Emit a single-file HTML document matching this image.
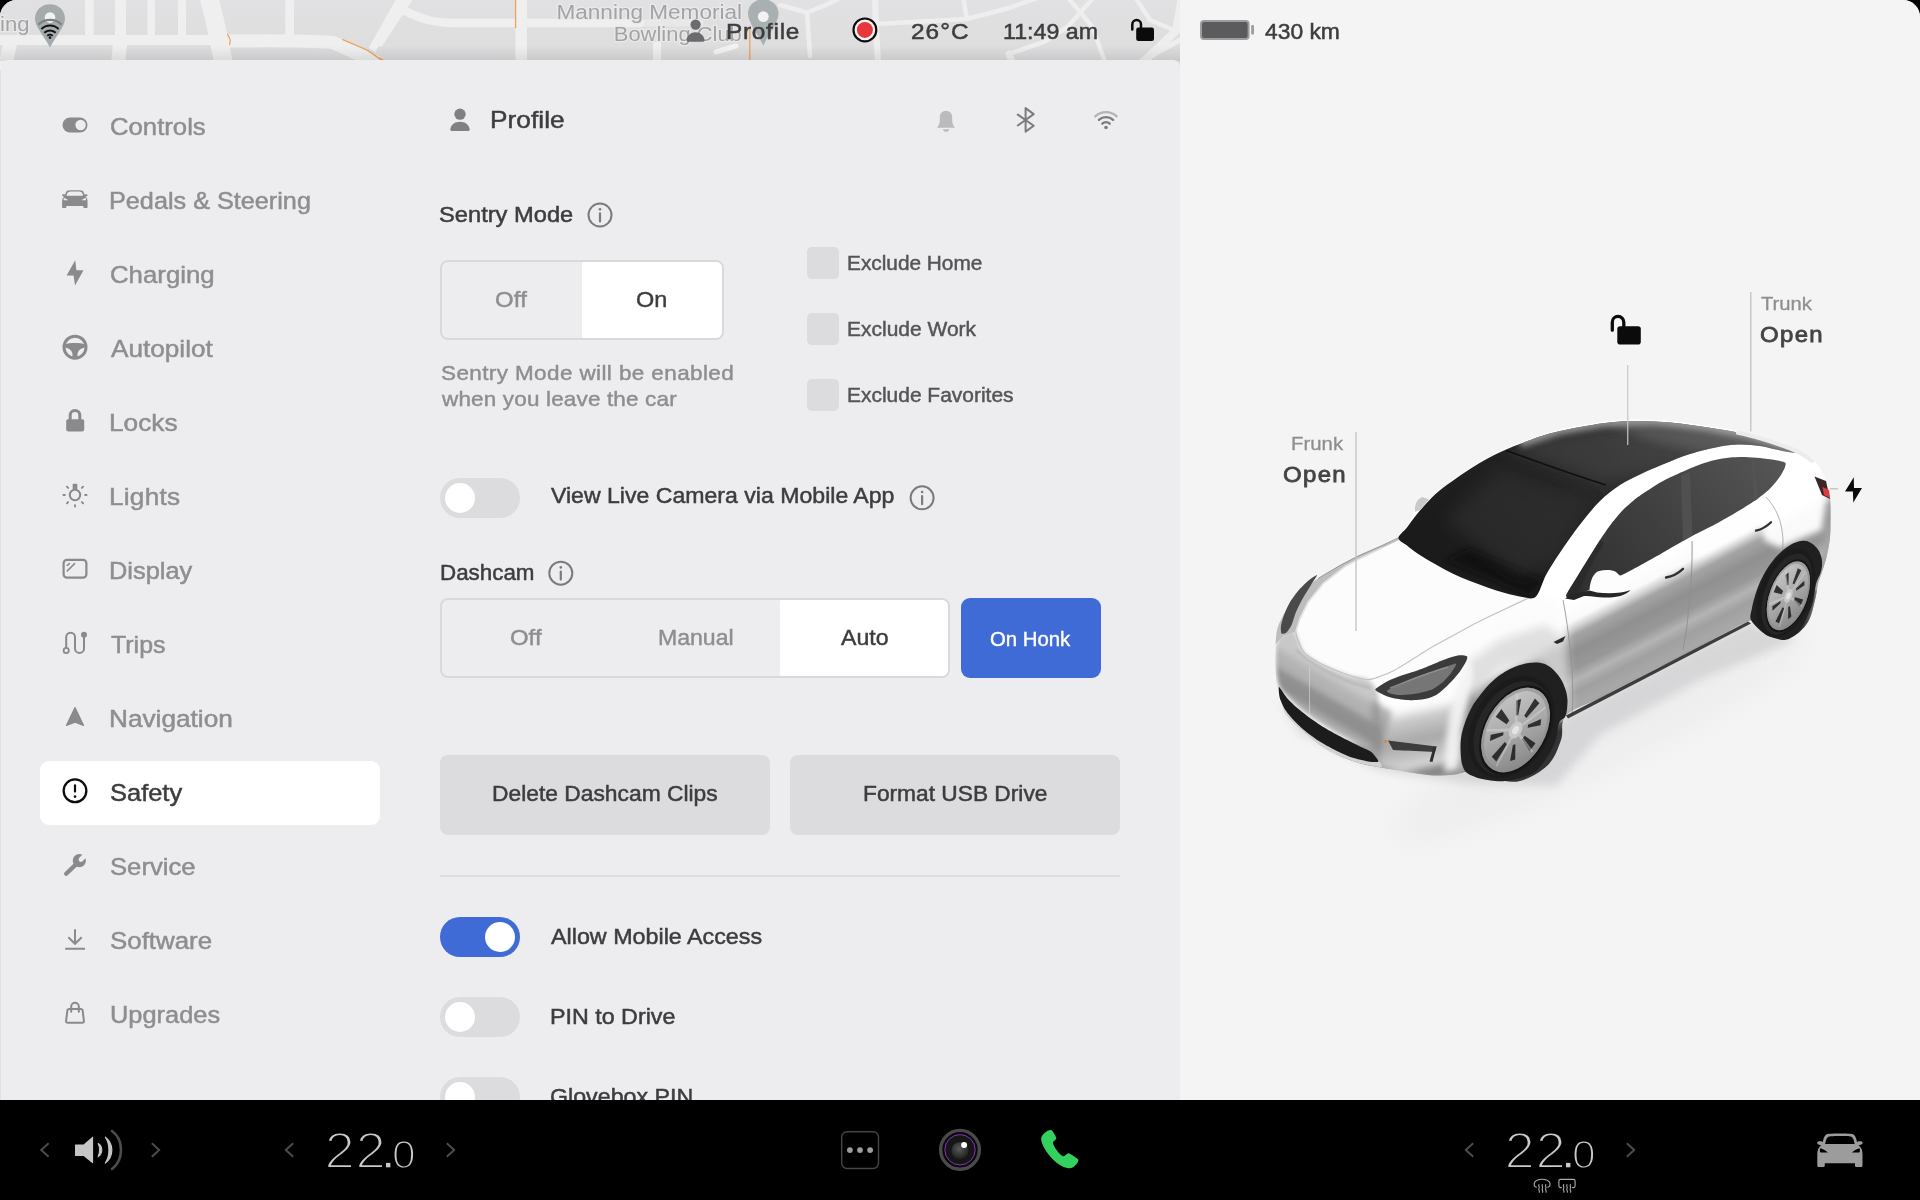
<!DOCTYPE html>
<html lang="en">
<head>
<meta charset="utf-8">
<title>Safety</title>
<style>
*{box-sizing:border-box;margin:0;padding:0}
html,body{width:1920px;height:1200px;overflow:hidden;background:#000}
body{position:relative;font-family:"Liberation Sans",sans-serif;color:#3d3d3f}
.abs{position:absolute}
svg{position:absolute;overflow:visible}
.g,#status,#map>svg{will-change:transform}
.t{transform-origin:0 50%;position:absolute;white-space:nowrap;line-height:30px;height:30px;-webkit-text-stroke:0.35px currentColor}
#screen{position:absolute;left:0;top:0;width:1920px;height:1100px;overflow:hidden;border-radius:17px 17px 0 0;background:#e1e1e3}
#map{position:absolute;left:0;top:0;width:1180px;height:70px;background:#e2e2e4;overflow:hidden}
#right{position:absolute;left:1180px;top:0;width:740px;height:1100px;background:#f4f4f5;overflow:hidden}
#right>.g{position:absolute;left:-1180px;top:0;width:1920px;height:1100px}
#panel{position:absolute;left:1px;top:60px;width:1179px;height:1040px;background:#ededef;border-radius:7px 7px 0 0;overflow:hidden}
#panel>.g{position:absolute;left:-1px;top:-60px;width:1180px;height:1100px}
#status{position:absolute;left:0;top:0;width:1920px;height:60px}
#bar{position:absolute;left:0;top:1100px;width:1920px;height:100px;background:#000}
#bar>.g{position:absolute;left:0;top:-1100px;width:1920px;height:1200px}
#selbg{left:40px;top:761px;width:340px;height:64px;background:#fff;border-radius:9px}
.seg{position:absolute;border:2px solid #d9d9db;border-radius:8px}
.segon{position:absolute;background:#fff;border-radius:2px 6px 6px 2px}
.cb{position:absolute;width:32px;height:32px;background:#dcdcde;border-radius:5px;left:807px}
.tog{position:absolute;left:440px;width:80px;height:40px;border-radius:20px;background:#dcdcde}
.tog i{position:absolute;left:5px;top:5px;width:30px;height:30px;border-radius:15px;background:#fff}
.tog.on{background:#3f6bd6}
.tog.on i{left:45px}
.btn{position:absolute;top:755px;width:330px;height:80px;background:#dcdcde;border-radius:8px}
</style>
</head>
<body>
<div id="screen">
<div id="map"><svg width="1180" height="70" viewBox="0 0 1180 70" style="left:0;top:0" fill="none">
<defs><linearGradient id="mapg" x1="0" y1="0" x2="0" y2="1"><stop offset="0" stop-color="#e1e1e3"/><stop offset="0.600" stop-color="#dededf"/><stop offset="1" stop-color="#dbdbdd"/></linearGradient></defs>
<rect width="1180" height="70" fill="url(#mapg)"/>
<g stroke="#efeff0" stroke-width="8" stroke-linejoin="round" stroke-linecap="butt">
<path d="M-5,40 H216" stroke-width="10"/>
<path d="M228,41 C262,41 300,40 333,42.500 L380,64" stroke-width="13"/>
<path d="M89.400,-5 V40" stroke-width="8.750"/>
<path d="M120.500,-5 V40" stroke-width="11"/>
<path d="M120.500,40 L118,64" stroke-width="14"/>
<path d="M151.200,-5 V40" stroke-width="7.500"/>
<path d="M182,-5 V40" stroke-width="8"/>
<path d="M10,44 L4,72" stroke-width="14"/>
<path d="M208,-6 L214,17 L219,40 L224,66" stroke-width="18.500"/>
<path d="M289.600,-5 V40" stroke-width="8.750"/>
<path d="M403,-5 L372,50"/>
<path d="M411,-5 L378,45" />
<path d="M398,8 C420,18 430,23 455,23 H640" stroke-width="8.500" stroke-linecap="round"/>
<path d="M521.200,-5 V70" stroke-width="11.500"/>
<path d="M657,42 V70" stroke-width="8"/>
</g>
<g stroke="#eeeeef" stroke-width="4.500" stroke-linejoin="round" stroke-linecap="round">
<path d="M640,23 H700" stroke-opacity="0.600" stroke-width="7"/>
<path d="M780,5 L807,12.500 L828,4 L842,-3"/>
<path d="M807,12.500 L810,56"/>
<path d="M875,-3 L876,30 L878,62" stroke-width="6"/>
<path d="M876,24 L967,19 L1009,8 L1040,-3"/>
<path d="M967,19 L963,-3"/>
<path d="M1067.500,-3 L1092.500,27 L1105,62"/>
<path d="M1094,-3 L1067.500,27 L1044.600,41.700 L1009,54"/>
<path d="M1009,54 L1012,62" stroke-width="7"/>
<path d="M1182,-3 L1176,31 L1143,62" stroke-width="8"/>
<path d="M1135,-3 L1150,20 L1176,31" />
<path d="M1140,62 L1180,40" stroke-width="5"/>
<path d="M736,46 L716,52" stroke-width="5" stroke="#f3f3f4"/>
</g>
<g stroke="#efa257" stroke-width="1.300" stroke-linecap="round">
<path d="M227.600,34.500 C230,38 231,41 229.600,44.600"/>
<path d="M342.700,39.600 L367,50 L381,59.600"/>
<path d="M515.600,-2 V27.500"/>
<path d="M749.800,27 V62"/>
<path d="M380,58 L383,60"/>
</g>
<!-- pins -->
<g>
<path d="M50,4.200 C41.500,4.200 35,10.400 35,18.600 C35,27 44,36 50,47.600 C56,36 65,27 65,18.600 C65,10.400 58.500,4.200 50,4.200 Z" fill="#a5abad"/>
<circle cx="50" cy="17.600" r="5.300" fill="#f2f2f3"/>
<path d="M38.500,24.600 A16.500,16.500 0 0 1 61.500,24.600" stroke="#7d8081" stroke-width="2.200"/>
<path d="M41.400,29 A12.200,12.200 0 0 1 58.600,29" stroke="#111" stroke-width="2"/>
<path d="M44.300,32.800 A8,8 0 0 1 55.700,32.800" stroke="#111" stroke-width="2"/>
<path d="M47.300,35.800 A3.800,3.800 0 0 1 52.700,35.800" stroke="#111" stroke-width="1.800"/>
<circle cx="50" cy="37.600" r="1.300" fill="#111"/>
</g>
<g>
<path d="M763.300,-0.800 C754.800,-0.800 748,5.400 748,13.600 C748,22 757,33 763.300,45.600 C769.600,33 778.600,22 778.600,13.600 C778.600,5.400 771.800,-0.800 763.300,-0.800 Z" fill="#a9b0b2"/>
<circle cx="763.300" cy="16.600" r="5.400" fill="#f2f2f3"/>
</g>
<!-- labels -->
<g font-family="Liberation Sans, sans-serif" fill="#a3a3a5" stroke="#e9e9ea" stroke-width="2.600" paint-order="stroke" stroke-linejoin="round">
<text x="0" y="31" font-size="20.500" textLength="29.500" lengthAdjust="spacingAndGlyphs">ing</text>
<text x="556.500" y="19" font-size="20" textLength="185.500" lengthAdjust="spacingAndGlyphs">Manning Memorial</text>
<text x="613.800" y="41" font-size="20" textLength="128" lengthAdjust="spacingAndGlyphs">Bowling Club</text>
</g>

</svg>
<div class="abs" style="left:0;top:46px;width:1180px;height:15px;background:linear-gradient(to bottom,rgba(0,0,0,0),rgba(0,0,0,.03) 40%,rgba(0,0,0,.085))"></div></div>
<div id="right"><div class="g"><svg width="1920" height="1100" viewBox="0 0 1920 1100" style="left:0;top:0" fill="none">
<defs>
<filter id="b18" x="-30%" y="-60%" width="160%" height="220%"><feGaussianBlur stdDeviation="16"/></filter>
<filter id="b8" x="-30%" y="-30%" width="160%" height="160%"><feGaussianBlur stdDeviation="8"/></filter>
<filter id="b5" x="-30%" y="-30%" width="160%" height="160%"><feGaussianBlur stdDeviation="5"/></filter>
<filter id="b3" x="-30%" y="-30%" width="160%" height="160%"><feGaussianBlur stdDeviation="3"/></filter>
<filter id="b2" x="-30%" y="-30%" width="160%" height="160%"><feGaussianBlur stdDeviation="2.2"/></filter>
<filter id="b1" x="-30%" y="-30%" width="160%" height="160%"><feGaussianBlur stdDeviation="1.2"/></filter>
<linearGradient id="bodyg" gradientUnits="userSpaceOnUse" x1="1660" y1="556" x2="1710.3" y2="653.4"><stop offset="0" stop-color="#ffffff"/><stop offset="0.159" stop-color="#fafafa"/><stop offset="0.224" stop-color="#d2d2d2"/><stop offset="0.285" stop-color="#a4a4a4"/><stop offset="0.420" stop-color="#909090"/><stop offset="0.560" stop-color="#989898"/><stop offset="0.654" stop-color="#b4b4b4"/><stop offset="0.748" stop-color="#a0a0a0"/><stop offset="0.869" stop-color="#a8a8a8"/><stop offset="0.918" stop-color="#a2a2a2"/><stop offset="0.940" stop-color="#5a5a5a"/><stop offset="1" stop-color="#333333"/></linearGradient>
<linearGradient id="glassg" gradientUnits="userSpaceOnUse" x1="1440" y1="590" x2="1720" y2="400"><stop offset="0" stop-color="#1a1a1a"/><stop offset="0.450" stop-color="#242424"/><stop offset="0.620" stop-color="#2b2b2b"/><stop offset="0.850" stop-color="#3f3f3f"/><stop offset="1" stop-color="#5a5a5a"/></linearGradient>
<linearGradient id="sideg" gradientUnits="userSpaceOnUse" x1="1590" y1="600" x2="1770" y2="450"><stop offset="0" stop-color="#303030"/><stop offset="0.500" stop-color="#424242"/><stop offset="1" stop-color="#555555"/></linearGradient>
<linearGradient id="noseg" gradientUnits="userSpaceOnUse" x1="1316" y1="666" x2="1291.75" y2="708"><stop offset="0" stop-color="#c8c8c8"/><stop offset="0.150" stop-color="#b6b6b6"/><stop offset="0.380" stop-color="#aeaeae"/><stop offset="0.470" stop-color="#929292"/><stop offset="0.720" stop-color="#8e8e8e"/><stop offset="0.860" stop-color="#a8a8a8"/><stop offset="1" stop-color="#bcbcbc"/></linearGradient>
<linearGradient id="lowg" gradientUnits="userSpaceOnUse" x1="1410" y1="700" x2="1425" y2="772"><stop offset="0" stop-color="#ffffff"/><stop offset="0.120" stop-color="#fafafa"/><stop offset="0.250" stop-color="#cccccc"/><stop offset="0.560" stop-color="#a8a8a8"/><stop offset="0.640" stop-color="#b4b4b4"/><stop offset="0.800" stop-color="#c6c6c6"/><stop offset="0.900" stop-color="#dadada"/><stop offset="0.960" stop-color="#909090"/><stop offset="1" stop-color="#808080"/></linearGradient>
<linearGradient id="rimg" x1="0" y1="0" x2="1" y2="1"><stop offset="0" stop-color="#cfcfcf"/><stop offset="0.500" stop-color="#a9a9a9"/><stop offset="1" stop-color="#7c7c7c"/></linearGradient>
<clipPath id="bodyclip"><path d="M1275.5,648.0 C1275.8,641.3 1275.8,635.3 1277.0,630.0 C1278.2,624.7 1280.7,620.3 1283.0,616.0 C1285.3,611.7 1287.5,608.5 1291.0,604.0 C1294.5,599.5 1299.5,593.2 1304.0,589.0 C1308.5,584.8 1312.2,582.3 1318.0,578.5 C1323.8,574.7 1332.3,569.8 1339.0,566.0 C1345.7,562.2 1350.8,559.4 1358.0,556.0 C1365.2,552.6 1375.0,548.7 1382.0,545.5 C1389.0,542.3 1395.7,540.4 1400.0,537.0 C1404.3,533.6 1405.7,529.2 1408.0,525.0 C1410.3,520.8 1412.7,515.8 1414.0,512.0 C1415.3,508.2 1414.8,504.5 1416.0,502.0 C1417.2,499.5 1419.0,497.5 1421.0,497.0 C1423.0,496.5 1425.5,499.5 1428.0,499.0 C1430.5,498.5 1431.9,497.1 1436.0,494.0 C1440.1,490.9 1446.8,484.8 1452.5,480.5 C1458.2,476.2 1464.2,471.8 1470.0,468.0 C1475.8,464.2 1481.7,460.7 1487.5,457.5 C1493.3,454.3 1499.2,451.6 1505.0,449.0 C1510.8,446.4 1516.7,444.2 1522.5,442.0 C1528.3,439.8 1533.8,437.6 1540.0,435.5 C1546.2,433.4 1553.3,431.2 1560.0,429.5 C1566.7,427.8 1572.5,426.8 1580.0,425.5 C1587.5,424.2 1596.7,422.5 1605.0,421.5 C1613.3,420.5 1621.7,419.8 1630.0,419.5 C1638.3,419.2 1646.7,419.6 1655.0,420.0 C1663.3,420.4 1671.7,421.1 1680.0,422.0 C1688.3,422.9 1696.7,424.2 1705.0,425.5 C1713.3,426.8 1722.5,428.1 1730.0,429.5 C1737.5,430.9 1743.3,432.3 1750.0,434.0 C1756.7,435.7 1763.0,437.2 1770.0,439.5 C1777.0,441.8 1786.0,444.9 1792.0,447.5 C1798.0,450.1 1802.2,452.6 1806.0,455.0 C1809.8,457.4 1812.5,459.5 1815.0,462.0 C1817.5,464.5 1819.2,467.0 1821.0,470.0 C1822.8,473.0 1824.6,476.3 1826.0,480.0 C1827.4,483.7 1828.8,487.8 1829.5,492.0 C1830.2,496.2 1830.3,500.3 1830.5,505.0 C1830.7,509.7 1830.6,514.7 1830.5,520.0 C1830.4,525.3 1830.6,531.2 1830.0,537.0 C1829.4,542.8 1828.3,549.2 1827.0,555.0 C1825.7,560.8 1823.5,567.2 1822.0,572.0 C1820.5,576.8 1819.2,579.3 1818.0,584.0 C1816.8,588.7 1816.7,593.7 1815.0,600.0 C1813.3,606.3 1811.8,615.8 1808.0,622.0 C1804.2,628.2 1797.5,634.7 1792.0,637.0 C1786.5,639.3 1780.8,638.2 1775.0,636.0 C1769.2,633.8 1761.5,626.4 1757.0,624.0 C1752.5,621.6 1757.5,617.8 1748.0,621.5 C1738.5,625.2 1716.3,638.1 1700.0,646.5 C1683.7,654.9 1666.7,663.4 1650.0,672.0 C1633.3,680.6 1614.0,690.8 1600.0,698.0 C1586.0,705.2 1572.5,708.5 1566.0,715.5 C1559.5,722.5 1564.0,731.8 1561.0,740.0 C1558.0,748.2 1554.8,758.2 1548.0,765.0 C1541.2,771.8 1528.8,778.7 1520.0,781.0 C1511.2,783.3 1503.3,780.5 1495.0,779.0 C1486.7,777.5 1476.7,772.8 1470.0,772.0 C1463.3,771.2 1461.2,773.9 1455.0,774.5 C1448.8,775.1 1440.3,775.8 1433.0,775.5 C1425.7,775.2 1419.7,773.8 1411.0,772.5 C1402.3,771.2 1390.0,769.2 1381.0,767.5 C1372.0,765.8 1366.3,765.6 1357.0,762.5 C1347.7,759.4 1334.0,754.1 1325.0,749.0 C1316.0,743.9 1309.5,737.7 1303.0,732.0 C1296.5,726.3 1290.2,721.3 1286.0,715.0 C1281.8,708.7 1279.8,701.5 1278.0,694.0 C1276.2,686.5 1275.9,677.7 1275.5,670.0 C1275.1,662.3 1275.2,654.7 1275.5,648.0 Z"/></clipPath>
<clipPath id="glassclip"><path d="M1398.5,538.0 C1398.5,535.0 1403.8,531.6 1407.0,527.5 C1410.2,523.4 1412.8,519.0 1417.5,513.5 C1422.2,508.0 1429.2,499.9 1435.0,494.5 C1440.8,489.1 1446.7,485.2 1452.5,481.0 C1458.3,476.8 1464.2,472.8 1470.0,469.0 C1475.8,465.2 1481.7,461.7 1487.5,458.5 C1493.3,455.3 1499.2,452.6 1505.0,450.0 C1510.8,447.4 1516.7,445.2 1522.5,443.0 C1528.3,440.8 1533.8,438.5 1540.0,436.5 C1546.2,434.5 1553.3,432.6 1560.0,431.0 C1566.7,429.4 1572.5,428.3 1580.0,427.0 C1587.5,425.7 1596.7,424.0 1605.0,423.0 C1613.3,422.0 1621.7,421.2 1630.0,421.0 C1638.3,420.8 1646.7,421.1 1655.0,421.5 C1663.3,421.9 1671.7,422.6 1680.0,423.5 C1688.3,424.4 1696.7,425.8 1705.0,427.0 C1713.3,428.2 1722.5,429.6 1730.0,431.0 C1737.5,432.4 1743.3,433.8 1750.0,435.5 C1756.7,437.2 1763.3,438.9 1770.0,441.0 C1776.7,443.1 1785.5,446.1 1790.0,448.0 C1794.5,449.9 1797.3,451.8 1797.0,452.5 C1796.7,453.2 1791.5,452.5 1788.0,452.0 C1784.5,451.5 1780.7,450.5 1776.0,449.5 C1771.3,448.5 1766.0,446.8 1760.0,446.0 C1754.0,445.2 1746.7,444.4 1740.0,444.5 C1733.3,444.6 1728.3,444.9 1720.0,446.5 C1711.7,448.1 1699.3,451.1 1690.0,454.0 C1680.7,456.9 1672.3,460.6 1664.0,464.0 C1655.7,467.4 1647.3,471.0 1640.0,474.5 C1632.7,478.0 1626.7,480.6 1620.0,485.0 C1613.3,489.4 1606.7,494.4 1600.0,501.0 C1593.3,507.6 1586.7,515.9 1580.0,524.5 C1573.3,533.1 1565.7,544.1 1560.0,552.5 C1554.3,560.9 1550.0,567.7 1546.0,575.0 C1542.0,582.3 1539.9,592.8 1536.0,596.5 C1532.1,600.2 1527.7,597.6 1522.5,597.0 C1517.3,596.4 1510.8,594.6 1505.0,593.0 C1499.2,591.4 1493.3,589.5 1487.5,587.5 C1481.7,585.5 1475.8,583.3 1470.0,581.0 C1464.2,578.7 1458.3,576.3 1452.5,573.5 C1446.7,570.7 1440.8,567.3 1435.0,564.0 C1429.2,560.7 1422.2,556.6 1417.5,553.5 C1412.8,550.4 1410.2,548.1 1407.0,545.5 C1403.8,542.9 1398.5,541.0 1398.5,538.0 Z"/></clipPath>
</defs>
<path d="M1566,716 L1748,622 L1796,640 L1700,680 L1600,735 L1556,786 L1470,784 L1380,770 L1300,733 L1280,700 L1400,758 L1500,770 Z" fill="#9a9a9d" opacity="0.300" filter="url(#b5)"/>
<ellipse cx="1600" cy="735" rx="230" ry="34" fill="#c4c4c7" opacity="0.120" filter="url(#b18)" transform="rotate(-26 1600 735)"/>
<path d="M1275.5,648.0 C1275.8,641.3 1275.8,635.3 1277.0,630.0 C1278.2,624.7 1280.7,620.3 1283.0,616.0 C1285.3,611.7 1287.5,608.5 1291.0,604.0 C1294.5,599.5 1299.5,593.2 1304.0,589.0 C1308.5,584.8 1312.2,582.3 1318.0,578.5 C1323.8,574.7 1332.3,569.8 1339.0,566.0 C1345.7,562.2 1350.8,559.4 1358.0,556.0 C1365.2,552.6 1375.0,548.7 1382.0,545.5 C1389.0,542.3 1395.7,540.4 1400.0,537.0 C1404.3,533.6 1405.7,529.2 1408.0,525.0 C1410.3,520.8 1412.7,515.8 1414.0,512.0 C1415.3,508.2 1414.8,504.5 1416.0,502.0 C1417.2,499.5 1419.0,497.5 1421.0,497.0 C1423.0,496.5 1425.5,499.5 1428.0,499.0 C1430.5,498.5 1431.9,497.1 1436.0,494.0 C1440.1,490.9 1446.8,484.8 1452.5,480.5 C1458.2,476.2 1464.2,471.8 1470.0,468.0 C1475.8,464.2 1481.7,460.7 1487.5,457.5 C1493.3,454.3 1499.2,451.6 1505.0,449.0 C1510.8,446.4 1516.7,444.2 1522.5,442.0 C1528.3,439.8 1533.8,437.6 1540.0,435.5 C1546.2,433.4 1553.3,431.2 1560.0,429.5 C1566.7,427.8 1572.5,426.8 1580.0,425.5 C1587.5,424.2 1596.7,422.5 1605.0,421.5 C1613.3,420.5 1621.7,419.8 1630.0,419.5 C1638.3,419.2 1646.7,419.6 1655.0,420.0 C1663.3,420.4 1671.7,421.1 1680.0,422.0 C1688.3,422.9 1696.7,424.2 1705.0,425.5 C1713.3,426.8 1722.5,428.1 1730.0,429.5 C1737.5,430.9 1743.3,432.3 1750.0,434.0 C1756.7,435.7 1763.0,437.2 1770.0,439.5 C1777.0,441.8 1786.0,444.9 1792.0,447.5 C1798.0,450.1 1802.2,452.6 1806.0,455.0 C1809.8,457.4 1812.5,459.5 1815.0,462.0 C1817.5,464.5 1819.2,467.0 1821.0,470.0 C1822.8,473.0 1824.6,476.3 1826.0,480.0 C1827.4,483.7 1828.8,487.8 1829.5,492.0 C1830.2,496.2 1830.3,500.3 1830.5,505.0 C1830.7,509.7 1830.6,514.7 1830.5,520.0 C1830.4,525.3 1830.6,531.2 1830.0,537.0 C1829.4,542.8 1828.3,549.2 1827.0,555.0 C1825.7,560.8 1823.5,567.2 1822.0,572.0 C1820.5,576.8 1819.2,579.3 1818.0,584.0 C1816.8,588.7 1816.7,593.7 1815.0,600.0 C1813.3,606.3 1811.8,615.8 1808.0,622.0 C1804.2,628.2 1797.5,634.7 1792.0,637.0 C1786.5,639.3 1780.8,638.2 1775.0,636.0 C1769.2,633.8 1761.5,626.4 1757.0,624.0 C1752.5,621.6 1757.5,617.8 1748.0,621.5 C1738.5,625.2 1716.3,638.1 1700.0,646.5 C1683.7,654.9 1666.7,663.4 1650.0,672.0 C1633.3,680.6 1614.0,690.8 1600.0,698.0 C1586.0,705.2 1572.5,708.5 1566.0,715.5 C1559.5,722.5 1564.0,731.8 1561.0,740.0 C1558.0,748.2 1554.8,758.2 1548.0,765.0 C1541.2,771.8 1528.8,778.7 1520.0,781.0 C1511.2,783.3 1503.3,780.5 1495.0,779.0 C1486.7,777.5 1476.7,772.8 1470.0,772.0 C1463.3,771.2 1461.2,773.9 1455.0,774.5 C1448.8,775.1 1440.3,775.8 1433.0,775.5 C1425.7,775.2 1419.7,773.8 1411.0,772.5 C1402.3,771.2 1390.0,769.2 1381.0,767.5 C1372.0,765.8 1366.3,765.6 1357.0,762.5 C1347.7,759.4 1334.0,754.1 1325.0,749.0 C1316.0,743.9 1309.5,737.7 1303.0,732.0 C1296.5,726.3 1290.2,721.3 1286.0,715.0 C1281.8,708.7 1279.8,701.5 1278.0,694.0 C1276.2,686.5 1275.9,677.7 1275.5,670.0 C1275.1,662.3 1275.2,654.7 1275.5,648.0 Z" fill="url(#bodyg)"/>
<g clip-path="url(#bodyclip)">
<path d="M1290,600 L1402,534 L1540,598 L1560,600 L1566,640 L1470,690 L1385,690 L1300,650 Z" fill="#fcfcfc" filter="url(#b5)"/>
<path d="M1466,664 L1500,640 L1545,625 L1566,640 L1572,716 L1560,700 L1540,660 L1500,668 L1470,700 Z" fill="#d8d8d8" opacity="0.800" filter="url(#b5)"/>
<path d="M1375.5,690.5 C1376.5,689.2 1380.1,694.2 1382.0,695.0 C1383.9,695.8 1389.3,697.2 1392.0,697.5 C1394.7,697.8 1401.7,698.0 1405.0,697.8 C1408.3,697.6 1416.7,696.6 1420.0,696.0 C1423.3,695.4 1430.3,693.5 1433.0,692.5 C1435.7,691.5 1440.8,689.0 1443.0,687.5 C1445.2,686.0 1450.0,681.9 1452.0,680.0 C1454.0,678.1 1458.4,673.1 1460.0,671.0 C1461.6,668.9 1464.8,662.4 1466.0,662.0 C1467.2,661.6 1470.0,664.7 1470.0,668.0 C1470.0,671.3 1467.0,684.5 1466.0,690.0 C1465.0,695.5 1461.9,708.0 1461.0,715.0 C1460.1,722.0 1458.8,743.4 1458.5,750.0 C1458.2,756.6 1458.9,769.1 1458.5,772.0 C1458.1,774.9 1458.0,774.1 1455.0,774.5 C1452.0,774.9 1438.1,775.7 1433.0,775.5 C1427.9,775.3 1417.1,773.5 1411.0,772.5 C1404.9,771.5 1384.9,768.5 1381.0,767.0 C1377.1,765.5 1378.2,763.2 1377.5,759.5 C1376.8,755.8 1375.5,741.2 1375.0,735.0 C1374.5,728.8 1372.9,711.2 1373.0,706.0 C1373.1,700.8 1374.5,691.8 1375.5,690.5 Z" fill="url(#lowg)" filter="url(#b3)"/>
<path d="M1275.5,648.0 C1275.8,644.1 1278.1,638.7 1279.0,637.0 C1279.9,635.3 1281.2,634.1 1283.0,633.5 C1284.8,632.9 1292.4,629.5 1294.7,631.5 C1297.0,633.5 1300.5,647.6 1303.0,651.0 C1305.5,654.4 1312.7,659.0 1316.0,661.0 C1319.3,663.0 1327.5,666.8 1331.5,668.5 C1335.5,670.2 1345.7,674.2 1350.0,675.5 C1354.3,676.8 1364.8,677.8 1368.0,679.5 C1371.2,681.2 1375.7,687.4 1377.0,690.5 C1378.3,693.6 1378.5,700.8 1379.0,706.0 C1379.5,711.2 1380.9,728.8 1381.0,735.0 C1381.1,741.2 1380.5,757.5 1379.5,759.5 C1378.5,761.5 1373.8,753.5 1372.0,752.0 C1370.2,750.5 1366.6,747.7 1364.0,746.3 C1361.4,744.9 1353.3,741.6 1350.0,740.0 C1346.7,738.4 1339.3,735.0 1335.8,733.0 C1332.3,731.0 1323.8,725.5 1320.0,723.0 C1316.2,720.5 1306.8,714.1 1303.3,711.3 C1299.8,708.5 1292.8,701.8 1290.0,699.0 C1287.2,696.2 1281.1,690.4 1279.5,687.0 C1277.9,683.6 1276.5,674.5 1276.0,670.0 C1275.5,665.5 1275.2,651.9 1275.5,648.0 Z" fill="url(#noseg)" filter="url(#b2)"/>
<path d="M1466,664 L1472,672 L1468,700 L1461,730 L1458,770 L1444,772 L1446,740 L1450,712 L1456,690 Z" fill="#f2f2f2" opacity="0.950" filter="url(#b3)"/>
<path d="M1372,700 L1392,712 L1384,740 L1378,762 L1370,750 Z" fill="#909090" opacity="0.700" filter="url(#b3)"/>
<path d="M1278.5,694.0 C1277.7,691.9 1278.7,695.2 1279.5,697.0 C1280.3,698.8 1283.4,706.9 1285.0,709.5 C1286.6,712.1 1290.9,717.2 1293.0,719.5 C1295.1,721.8 1300.4,727.0 1303.3,729.5 C1306.2,732.0 1314.2,738.0 1318.0,740.5 C1321.8,743.0 1331.8,748.6 1335.8,750.5 C1339.8,752.4 1348.2,755.3 1352.0,756.5 C1355.8,757.7 1365.3,760.1 1368.3,760.5 C1371.3,760.9 1376.5,759.2 1378.0,760.0 C1379.5,760.8 1383.5,766.7 1381.0,767.0 C1378.5,767.3 1363.5,764.6 1357.0,762.5 C1350.5,760.4 1331.3,752.6 1325.0,749.0 C1318.7,745.4 1307.5,736.0 1303.0,732.0 C1298.5,728.0 1288.9,719.4 1286.0,715.0 C1283.1,710.6 1279.3,696.1 1278.5,694.0 Z" fill="#d2d2d2"/>
<path d="M1296,650 C1322,672 1348,683 1370,688" stroke="#9a9a9a" stroke-width="1.500" opacity="0.550" filter="url(#b1)"/>
<path d="M1309.500,668 V716" stroke="#d8d8d8" stroke-width="1" opacity="0.600"/>
<path d="M1823,548 L1828,520 L1834,500 L1836,600 L1806,640 L1814,600 L1821,575 Z" fill="#a6a6a6" opacity="0.900" filter="url(#b3)"/>
<path d="M1695,545 L1740,522 L1775,500 L1782,510 L1745,535 L1697,560 Z" fill="#ffffff" opacity="0.750" filter="url(#b3)"/>
<path d="M1758,505 L1786,466 L1815,468 L1826,498 L1822,530 L1803,538 L1780,548 L1764,540 Z" fill="#ffffff" opacity="0.950" filter="url(#b3)"/>
</g>
<path d="M1323.3,583.3 C1321.3,585.8 1311.4,597.0 1308.3,601.7 C1305.2,606.4 1301.7,614.3 1300.0,618.3 C1298.3,622.3 1295.4,627.3 1295.8,631.7 C1296.2,636.1 1300.3,647.1 1303.0,651.0 C1305.7,654.9 1312.2,658.7 1316.0,661.0 C1319.8,663.3 1327.0,666.6 1331.5,668.5 C1336.0,670.4 1345.1,674.0 1350.0,675.5 C1354.9,677.0 1363.9,679.4 1368.0,679.5 C1372.1,679.6 1377.5,677.2 1381.0,676.0 C1384.5,674.8 1389.7,672.8 1394.0,670.5 C1398.3,668.2 1407.8,662.2 1413.0,659.0 C1418.2,655.8 1427.4,649.9 1433.0,646.6 C1438.6,643.3 1449.2,637.7 1455.0,634.5 C1460.8,631.3 1470.2,626.1 1476.6,622.8 C1483.0,619.5 1495.8,613.4 1503.0,610.0 C1510.2,606.6 1527.0,598.7 1530.7,597.0" stroke="#bcbcbc" stroke-width="1.200" opacity="0.900"/>
<g clip-path="url(#bodyclip)"><path d="M1400,535 L1382,543.500 L1358,554 L1339,564 L1318,576.500 L1304,587 L1291,602 L1283,614 L1276,628 L1274,646 L1283,636 L1295.800,631.700 L1300,618.300 L1308.300,601.700 L1323.300,583.300 L1345,566.500 L1358,559.500 L1382,548 L1400,539.500 Z" fill="#bdbdbd"/><path d="M1295.800,631.700 L1300,618.300 L1308.300,601.700 L1323.300,583.300 L1345,566.500 L1358,559.500 L1382,548" stroke="#e2e2e2" stroke-width="1.600" fill="none"/></g>
<path d="M1318,578.5 L1339,566 L1358,556 L1382,545.5 L1400,537" stroke="#8a8a8a" stroke-width="1" opacity="0.800"/>
<path d="M1279.0,687.0 C1279.8,687.0 1284.9,695.6 1287.0,698.0 C1289.1,700.4 1294.0,705.2 1296.7,707.5 C1299.4,709.8 1306.9,715.7 1310.0,718.0 C1313.1,720.3 1320.1,725.0 1323.3,727.0 C1326.5,729.0 1333.9,733.1 1337.0,734.8 C1340.1,736.5 1347.2,740.1 1350.0,741.5 C1352.8,742.9 1358.5,745.8 1361.0,747.0 C1363.5,748.2 1369.3,750.3 1371.3,752.0 C1373.3,753.7 1378.8,760.4 1378.5,761.5 C1378.2,762.6 1371.4,762.0 1368.3,761.5 C1365.2,761.0 1355.8,758.8 1352.0,757.5 C1348.2,756.2 1339.8,752.5 1335.8,750.5 C1331.8,748.5 1321.8,743.0 1318.0,740.5 C1314.2,738.0 1306.2,732.0 1303.3,729.5 C1300.4,727.0 1295.1,721.8 1293.0,719.5 C1290.9,717.2 1286.5,712.0 1285.0,709.5 C1283.5,707.0 1280.5,700.6 1279.8,698.0 C1279.1,695.4 1278.2,687.0 1279.0,687.0 Z" fill="#1c1c1c"/>
<path d="M1388,740.500 L1436.500,746.500 L1435,752 L1393,750 Z" fill="#3d3d3d"/><circle cx="1385.500" cy="741.500" r="1.800" fill="#d88a4a"/><path d="M1433.500,747 L1436.500,746.500 L1432.500,762 L1429.500,761.500 Z" fill="#2e2e2e"/>
<path d="M1317.0,575.0 C1316.7,574.5 1310.2,579.1 1308.0,581.0 C1305.8,582.9 1300.2,588.4 1298.0,591.0 C1295.8,593.6 1291.1,600.2 1289.5,603.0 C1287.9,605.8 1285.0,612.3 1284.0,615.0 C1283.0,617.7 1281.3,623.8 1281.0,626.0 C1280.7,628.2 1280.9,632.7 1281.5,633.5 C1282.1,634.3 1285.3,633.5 1286.5,632.5 C1287.7,631.5 1290.4,627.4 1291.5,625.0 C1292.6,622.6 1294.7,615.1 1296.0,612.0 C1297.3,608.9 1301.2,601.1 1303.0,598.0 C1304.8,594.9 1309.4,587.7 1311.0,585.0 C1312.6,582.3 1317.3,575.5 1317.0,575.0 Z" fill="#4a4a4a"/>
<path d="M1375.3,689.3 C1375.8,688.4 1380.3,685.6 1382.0,684.5 C1383.7,683.4 1387.5,681.1 1390.0,680.0 C1392.5,678.9 1399.9,676.1 1403.0,675.0 C1406.1,673.9 1413.5,671.8 1416.7,670.7 C1419.9,669.6 1426.9,666.7 1430.0,665.5 C1433.1,664.3 1440.7,661.0 1443.3,660.0 C1445.9,659.0 1450.1,657.5 1452.0,657.0 C1453.9,656.5 1457.8,655.5 1459.3,655.3 C1460.8,655.1 1463.6,655.3 1464.5,655.5 C1465.4,655.7 1467.1,656.1 1467.3,656.7 C1467.5,657.3 1466.8,659.6 1466.5,660.5 C1466.2,661.4 1465.5,662.7 1464.7,664.0 C1463.9,665.3 1461.2,669.8 1460.0,671.5 C1458.8,673.2 1455.6,676.9 1454.0,678.7 C1452.4,680.5 1448.0,685.1 1446.0,687.0 C1444.0,688.9 1438.9,693.4 1436.7,694.7 C1434.5,696.0 1429.3,697.9 1427.0,698.5 C1424.7,699.1 1419.2,699.8 1416.7,700.0 C1414.2,700.2 1408.3,700.2 1406.0,700.0 C1403.7,699.8 1398.7,699.1 1396.7,698.7 C1394.7,698.4 1390.6,697.5 1389.0,697.0 C1387.4,696.5 1384.6,695.3 1383.3,694.7 C1382.0,694.1 1378.9,692.6 1378.0,692.0 C1377.1,691.4 1374.8,690.2 1375.3,689.3 Z" fill="#3b3b3b"/>
<path d="M1387.0,691.0 C1387.6,690.0 1394.1,686.5 1397.0,685.0 C1399.9,683.5 1408.2,680.0 1412.0,678.5 C1415.8,677.0 1425.9,673.4 1430.0,672.0 C1434.1,670.6 1444.0,667.4 1447.0,666.5 C1450.0,665.6 1455.5,663.2 1456.0,664.0 C1456.5,664.8 1452.5,670.9 1451.0,673.0 C1449.5,675.1 1445.2,680.1 1443.0,682.0 C1440.8,683.9 1435.0,688.2 1432.0,689.5 C1429.0,690.8 1420.5,692.9 1417.0,693.5 C1413.5,694.1 1404.9,694.9 1402.0,695.0 C1399.1,695.1 1393.8,694.5 1392.0,694.0 C1390.2,693.5 1386.4,692.0 1387.0,691.0 Z" fill="#767676"/>
<path d="M1390,688 C1405,682 1425,674 1448,667" stroke="#9a9a9a" stroke-width="1.500" opacity="0.700"/>
<path d="M1398.5,538.0 C1398.5,535.0 1403.8,531.6 1407.0,527.5 C1410.2,523.4 1412.8,519.0 1417.5,513.5 C1422.2,508.0 1429.2,499.9 1435.0,494.5 C1440.8,489.1 1446.7,485.2 1452.5,481.0 C1458.3,476.8 1464.2,472.8 1470.0,469.0 C1475.8,465.2 1481.7,461.7 1487.5,458.5 C1493.3,455.3 1499.2,452.6 1505.0,450.0 C1510.8,447.4 1516.7,445.2 1522.5,443.0 C1528.3,440.8 1533.8,438.5 1540.0,436.5 C1546.2,434.5 1553.3,432.6 1560.0,431.0 C1566.7,429.4 1572.5,428.3 1580.0,427.0 C1587.5,425.7 1596.7,424.0 1605.0,423.0 C1613.3,422.0 1621.7,421.2 1630.0,421.0 C1638.3,420.8 1646.7,421.1 1655.0,421.5 C1663.3,421.9 1671.7,422.6 1680.0,423.5 C1688.3,424.4 1696.7,425.8 1705.0,427.0 C1713.3,428.2 1722.5,429.6 1730.0,431.0 C1737.5,432.4 1743.3,433.8 1750.0,435.5 C1756.7,437.2 1763.3,438.9 1770.0,441.0 C1776.7,443.1 1785.5,446.1 1790.0,448.0 C1794.5,449.9 1797.3,451.8 1797.0,452.5 C1796.7,453.2 1791.5,452.5 1788.0,452.0 C1784.5,451.5 1780.7,450.5 1776.0,449.5 C1771.3,448.5 1766.0,446.8 1760.0,446.0 C1754.0,445.2 1746.7,444.4 1740.0,444.5 C1733.3,444.6 1728.3,444.9 1720.0,446.5 C1711.7,448.1 1699.3,451.1 1690.0,454.0 C1680.7,456.9 1672.3,460.6 1664.0,464.0 C1655.7,467.4 1647.3,471.0 1640.0,474.5 C1632.7,478.0 1626.7,480.6 1620.0,485.0 C1613.3,489.4 1606.7,494.4 1600.0,501.0 C1593.3,507.6 1586.7,515.9 1580.0,524.5 C1573.3,533.1 1565.7,544.1 1560.0,552.5 C1554.3,560.9 1550.0,567.7 1546.0,575.0 C1542.0,582.3 1539.9,592.8 1536.0,596.5 C1532.1,600.2 1527.7,597.6 1522.5,597.0 C1517.3,596.4 1510.8,594.6 1505.0,593.0 C1499.2,591.4 1493.3,589.5 1487.5,587.5 C1481.7,585.5 1475.8,583.3 1470.0,581.0 C1464.2,578.7 1458.3,576.3 1452.5,573.5 C1446.7,570.7 1440.8,567.3 1435.0,564.0 C1429.2,560.7 1422.2,556.6 1417.5,553.5 C1412.8,550.4 1410.2,548.1 1407.0,545.5 C1403.8,542.9 1398.5,541.0 1398.5,538.0 Z" fill="url(#glassg)"/>
<g clip-path="url(#glassclip)">
<path d="M1505,450 L1540,436 L1640,420 L1760,440 L1800,452 L1740,445 L1690,455 L1640,475 L1604,485 Z" fill="#4a4a4a" opacity="0.550" filter="url(#b8)"/>
<path d="M1600,420 L1700,424 L1790,448 L1760,446 L1700,452 L1650,440 Z" fill="#6a6a6a" opacity="0.500" filter="url(#b5)"/>
<path d="M1520,443 L1560,430 L1605,422 L1655,420.500 L1705,426 L1750,434.500 L1795,449" stroke="#b0b0b0" stroke-width="9" opacity="0.800" filter="url(#b3)"/>
<path d="M1445,560 L1530,597 L1545,580 L1470,548 Z" fill="#0c0c0c" opacity="0.700" filter="url(#b3)"/>
<path d="M1445,520 L1500,470 L1590,500 L1560,560 L1520,575 Z" fill="#333333" opacity="0.600" filter="url(#b8)"/>
</g>
<path d="M1506,450.500 C1535,461 1570,474 1606,485" stroke="#0a0a0a" stroke-width="1.600" opacity="0.850"/>
<path d="M1738,432.800 C1752,435.500 1768,440.300 1790,448.300 C1798,451.500 1806,456 1812,461" stroke="#ececec" stroke-width="4.200" stroke-linecap="round"/>
<path d="M1566.0,596.0 C1566.1,593.5 1573.8,582.3 1577.0,577.0 C1580.2,571.7 1586.9,560.9 1590.0,556.0 C1593.1,551.1 1597.3,544.1 1600.0,540.0 C1602.7,535.9 1607.1,529.4 1610.0,525.5 C1612.9,521.6 1618.5,514.6 1622.0,511.0 C1625.5,507.4 1632.3,501.4 1636.0,498.5 C1639.7,495.6 1646.3,491.4 1650.0,489.0 C1653.7,486.6 1659.7,482.8 1664.0,480.5 C1668.3,478.2 1677.2,474.1 1682.0,472.0 C1686.8,469.9 1695.6,466.1 1700.0,464.5 C1704.4,462.9 1711.0,460.9 1715.0,460.0 C1719.0,459.1 1726.0,457.9 1730.0,457.5 C1734.0,457.1 1741.0,456.9 1745.0,457.0 C1749.0,457.1 1756.0,457.6 1760.0,458.0 C1764.0,458.4 1771.7,459.4 1775.0,460.0 C1778.3,460.6 1783.7,461.6 1785.0,462.5 C1786.3,463.4 1785.5,465.3 1785.0,467.0 C1784.5,468.7 1782.3,472.9 1781.0,475.0 C1779.7,477.1 1776.7,480.9 1775.0,483.0 C1773.3,485.1 1770.3,488.4 1768.0,490.5 C1765.7,492.6 1761.1,496.3 1758.0,498.5 C1754.9,500.7 1748.7,504.7 1745.0,507.0 C1741.3,509.3 1734.4,513.5 1730.0,516.0 C1725.6,518.5 1716.8,523.5 1712.0,526.0 C1707.2,528.5 1698.8,532.5 1694.0,535.0 C1689.2,537.5 1680.8,542.3 1676.0,545.0 C1671.2,547.7 1662.8,552.8 1658.0,555.5 C1653.2,558.2 1644.4,563.1 1640.0,565.5 C1635.6,567.9 1628.7,571.7 1625.0,573.5 C1621.3,575.3 1615.3,577.5 1612.0,579.0 C1608.7,580.5 1603.2,583.5 1600.0,585.0 C1596.8,586.5 1591.2,589.1 1588.0,590.5 C1584.8,591.9 1578.9,594.8 1576.0,595.5 C1573.1,596.2 1565.9,598.5 1566.0,596.0 Z" fill="url(#sideg)"/>
<path d="M1681,475.500 L1690,472 L1692.500,535.500 L1683,541 Z" fill="#505050"/>
<path d="M1751.500,458 L1754.500,458 L1757.500,499 L1754.500,501 Z" fill="#555555" opacity="0.800"/>
<path d="M1566,596 L1577,577 L1590,556 L1600,540 L1604,543 L1594,560 L1584,580 L1577,596 Z" fill="#262626" opacity="0.600"/>
<path d="M1589.500,590 C1590,580 1594,572.500 1599,571 C1605,569.500 1612,569.500 1616,572 C1622,577 1627,584 1630.500,590 C1622,593.500 1608,594 1597,592.500 Z" fill="#fdfdfd"/>
<path d="M1565,598.500 L1572,594 L1589.500,590.500 L1597,592.500 C1608,594 1622,593.500 1630.500,590 C1626,595.500 1616,598 1604,597.500 C1596,597 1590,595.500 1584,596 L1574,600 Z" fill="#262626"/>
<path d="M1415,512 C1414,504 1418,497.500 1422.500,497 L1429,499.500 L1420,510 Z" fill="#c9c9c9"/>
<path d="M1563,600 C1567,620 1570,645 1572,670 C1573,690 1573,705 1572,714" stroke="#8f8f8f" stroke-width="1" opacity="0.850"/>
<path d="M1692,541 C1692.500,560 1691,590 1687,625 C1686,635 1684,644 1683,650" stroke="#8f8f8f" stroke-width="1.100" opacity="0.850"/>
<path d="M1766,497 C1776,508 1782,520 1783,540 C1783,548 1782,554 1780,560" stroke="#a0a0a0" stroke-width="1" opacity="0.800"/>
<path d="M1666,577.500 C1672,576.500 1678,573.500 1683,568.800" stroke="#303030" stroke-width="2.300" stroke-linecap="round"/>
<path d="M1756,530.700 C1762,529.200 1767,526.200 1771,522.200" stroke="#303030" stroke-width="2.300" stroke-linecap="round"/>
<path d="M1553.500,642 L1565.500,636 L1563,641.500 L1557,644 Z" fill="#2a2a2a"/>
<path d="M1814.500,476.500 L1826,481 L1830,499 L1822,495 Z" fill="#3a2626"/>
<path d="M1822.500,487 L1829,490 L1830,498 L1824,495 Z" fill="#e23b3f"/>
<path d="M1566,715.500 L1748,621.500 L1751,623.500 L1568,718.500 Z" fill="#2a2a2a" opacity="0.900"/>
<path d="M1462.0,764.0 C1461.1,760.7 1460.6,751.9 1460.5,748.0 C1460.4,744.1 1460.8,738.7 1461.5,735.0 C1462.2,731.3 1464.5,723.9 1466.0,720.0 C1467.5,716.1 1470.5,709.5 1472.5,706.0 C1474.5,702.5 1478.7,697.0 1481.0,694.0 C1483.3,691.0 1487.5,686.0 1490.0,683.5 C1492.5,681.0 1497.3,676.9 1500.0,675.0 C1502.7,673.1 1507.3,670.3 1510.0,669.0 C1512.7,667.7 1517.5,665.8 1520.0,665.0 C1522.5,664.2 1526.7,663.3 1529.0,663.0 C1531.3,662.7 1535.2,662.3 1537.5,662.5 C1539.8,662.7 1544.0,663.6 1546.0,664.5 C1548.0,665.4 1550.9,667.6 1552.5,669.0 C1554.1,670.4 1556.7,673.3 1558.0,675.0 C1559.3,676.7 1561.4,679.9 1562.5,682.0 C1563.6,684.1 1565.3,688.6 1566.0,691.0 C1566.7,693.4 1567.4,697.6 1567.5,700.0 C1567.6,702.4 1567.3,706.7 1567.0,709.0 C1566.7,711.3 1566.1,715.1 1565.0,717.0 C1563.9,718.9 1560.5,719.3 1559.0,723.0 C1557.5,726.7 1557.2,738.5 1554.0,745.0 C1550.8,751.5 1541.5,767.2 1535.0,772.0 C1528.5,776.8 1512.1,780.1 1505.0,781.0 C1497.9,781.9 1487.1,780.1 1482.0,779.0 C1476.9,777.9 1469.7,775.0 1467.0,773.0 C1464.3,771.0 1462.9,767.3 1462.0,764.0 Z" fill="#202020"/>
<ellipse cx="1511.5" cy="727" rx="38.5" ry="54.5" fill="#1b1b1b" transform="rotate(30 1511.5 727)"/>
<ellipse cx="1512.5" cy="728" rx="34.5" ry="50.5" fill="#262626" transform="rotate(30 1512.5 728)"/>
<g transform="translate(1515.6,730) rotate(30) scale(29.6,45.7)">
<circle r="1.060" fill="#141414"/>
<circle r="1" fill="url(#rimg)"/>
<path transform="rotate(10.0)" d="M-0.051,-0.36 L-0.106,-0.8 L0.106,-0.8 L0.051,-0.36 Z" fill="#1a1a1a" opacity="0.850"/>
<path transform="rotate(55.0)" d="M-0.036,-0.36 L-0.075,-0.74 L0.075,-0.74 L0.036,-0.36 Z" fill="#1a1a1a" opacity="0.850"/>
<path transform="rotate(100.0)" d="M-0.051,-0.36 L-0.106,-0.8 L0.106,-0.8 L0.051,-0.36 Z" fill="#1a1a1a" opacity="0.850"/>
<path transform="rotate(145.0)" d="M-0.036,-0.36 L-0.075,-0.74 L0.075,-0.74 L0.036,-0.36 Z" fill="#1a1a1a" opacity="0.850"/>
<path transform="rotate(190.0)" d="M-0.051,-0.36 L-0.106,-0.8 L0.106,-0.8 L0.051,-0.36 Z" fill="#1a1a1a" opacity="0.850"/>
<path transform="rotate(235.0)" d="M-0.036,-0.36 L-0.075,-0.74 L0.075,-0.74 L0.036,-0.36 Z" fill="#1a1a1a" opacity="0.850"/>
<path transform="rotate(280.0)" d="M-0.051,-0.36 L-0.106,-0.8 L0.106,-0.8 L0.051,-0.36 Z" fill="#1a1a1a" opacity="0.850"/>
<path transform="rotate(325.0)" d="M-0.036,-0.36 L-0.075,-0.74 L0.075,-0.74 L0.036,-0.36 Z" fill="#1a1a1a" opacity="0.850"/>
<path transform="rotate(32.5)" d="M-0.030,-0.200 L-0.015,-0.900 L0.030,-0.900 L0.040,-0.200 Z" fill="#dcdcdc" opacity="0.450"/>
<path transform="rotate(104.5)" d="M-0.030,-0.200 L-0.015,-0.900 L0.030,-0.900 L0.040,-0.200 Z" fill="#dcdcdc" opacity="0.450"/>
<path transform="rotate(176.5)" d="M-0.030,-0.200 L-0.015,-0.900 L0.030,-0.900 L0.040,-0.200 Z" fill="#dcdcdc" opacity="0.450"/>
<path transform="rotate(248.5)" d="M-0.030,-0.200 L-0.015,-0.900 L0.030,-0.900 L0.040,-0.200 Z" fill="#dcdcdc" opacity="0.450"/>
<path transform="rotate(320.5)" d="M-0.030,-0.200 L-0.015,-0.900 L0.030,-0.900 L0.040,-0.200 Z" fill="#dcdcdc" opacity="0.450"/>
<circle r="0.960" fill="none" stroke="#8c8c8c" stroke-width="0.080" opacity="0.600"/>
<circle r="0.200" fill="#c9c9c9"/><circle r="0.100" fill="#e4e4e4"/>
</g>
<path d="M1751.0,620.0 C1749.3,616.5 1751.5,611.2 1752.0,608.0 C1752.5,604.8 1753.9,599.5 1755.0,596.0 C1756.1,592.5 1758.4,585.6 1760.0,582.0 C1761.6,578.4 1765.0,572.2 1767.0,569.0 C1769.0,565.8 1772.7,560.7 1775.0,558.0 C1777.3,555.3 1782.1,550.9 1784.5,549.0 C1786.9,547.1 1790.8,544.6 1793.0,543.5 C1795.2,542.4 1799.0,541.3 1801.0,541.0 C1803.0,540.7 1806.2,540.9 1808.0,541.5 C1809.8,542.1 1813.2,544.4 1814.7,545.7 C1816.2,547.0 1818.1,549.3 1819.0,551.0 C1819.9,552.7 1821.3,556.5 1821.7,558.5 C1822.1,560.5 1822.2,564.1 1822.0,566.0 C1821.8,567.9 1821.3,570.6 1820.5,573.0 C1819.7,575.4 1817.1,579.7 1816.0,584.0 C1814.9,588.3 1814.1,598.9 1812.0,605.0 C1809.9,611.1 1803.6,625.3 1800.0,630.0 C1796.4,634.7 1789.7,639.5 1785.0,640.0 C1780.3,640.5 1769.5,636.7 1765.0,634.0 C1760.5,631.3 1752.7,623.5 1751.0,620.0 Z" fill="#202020"/>
<ellipse cx="1785.8" cy="593" rx="26" ry="46.5" fill="#1b1b1b" transform="rotate(20.7 1785.8 593)"/>
<ellipse cx="1786.8" cy="594" rx="22" ry="42.5" fill="#262626" transform="rotate(20.7 1786.8 594)"/>
<g transform="translate(1788.4,595.8) rotate(20.7) scale(18.7,36.1)">
<circle r="1.060" fill="#141414"/>
<circle r="1" fill="url(#rimg)"/>
<path transform="rotate(4.0)" d="M-0.051,-0.36 L-0.106,-0.8 L0.106,-0.8 L0.051,-0.36 Z" fill="#1a1a1a" opacity="0.850"/>
<path transform="rotate(49.0)" d="M-0.036,-0.36 L-0.075,-0.74 L0.075,-0.74 L0.036,-0.36 Z" fill="#1a1a1a" opacity="0.850"/>
<path transform="rotate(94.0)" d="M-0.051,-0.36 L-0.106,-0.8 L0.106,-0.8 L0.051,-0.36 Z" fill="#1a1a1a" opacity="0.850"/>
<path transform="rotate(139.0)" d="M-0.036,-0.36 L-0.075,-0.74 L0.075,-0.74 L0.036,-0.36 Z" fill="#1a1a1a" opacity="0.850"/>
<path transform="rotate(184.0)" d="M-0.051,-0.36 L-0.106,-0.8 L0.106,-0.8 L0.051,-0.36 Z" fill="#1a1a1a" opacity="0.850"/>
<path transform="rotate(229.0)" d="M-0.036,-0.36 L-0.075,-0.74 L0.075,-0.74 L0.036,-0.36 Z" fill="#1a1a1a" opacity="0.850"/>
<path transform="rotate(274.0)" d="M-0.051,-0.36 L-0.106,-0.8 L0.106,-0.8 L0.051,-0.36 Z" fill="#1a1a1a" opacity="0.850"/>
<path transform="rotate(319.0)" d="M-0.036,-0.36 L-0.075,-0.74 L0.075,-0.74 L0.036,-0.36 Z" fill="#1a1a1a" opacity="0.850"/>
<path transform="rotate(26.5)" d="M-0.030,-0.200 L-0.015,-0.900 L0.030,-0.900 L0.040,-0.200 Z" fill="#dcdcdc" opacity="0.450"/>
<path transform="rotate(98.5)" d="M-0.030,-0.200 L-0.015,-0.900 L0.030,-0.900 L0.040,-0.200 Z" fill="#dcdcdc" opacity="0.450"/>
<path transform="rotate(170.5)" d="M-0.030,-0.200 L-0.015,-0.900 L0.030,-0.900 L0.040,-0.200 Z" fill="#dcdcdc" opacity="0.450"/>
<path transform="rotate(242.5)" d="M-0.030,-0.200 L-0.015,-0.900 L0.030,-0.900 L0.040,-0.200 Z" fill="#dcdcdc" opacity="0.450"/>
<path transform="rotate(314.5)" d="M-0.030,-0.200 L-0.015,-0.900 L0.030,-0.900 L0.040,-0.200 Z" fill="#dcdcdc" opacity="0.450"/>
<circle r="0.960" fill="none" stroke="#8c8c8c" stroke-width="0.080" opacity="0.600"/>
<circle r="0.200" fill="#c9c9c9"/><circle r="0.100" fill="#e4e4e4"/>
</g>
</svg>

<svg width="1920" height="1100" viewBox="0 0 1920 1100" style="left:0;top:0" fill="none">
<!-- battery -->
<rect x="1201" y="21" width="47.600" height="18" rx="3" fill="#5b5b5d" stroke="#9d9d9f" stroke-width="2"/>
<rect x="1251.200" y="25" width="2.800" height="9.600" rx="1.200" fill="#9d9d9f"/>
<!-- leader lines -->
<path d="M1750.800,292 V431.500" stroke="#c5c5c7" stroke-width="1.400"/>
<path d="M1627.700,365 V445" stroke="#c5c5c7" stroke-opacity="0.850" stroke-width="1.400"/>
<path d="M1356,432 V631" stroke="#c5c5c7" stroke-width="1.400"/>
<path d="M1830,488.800 H1838" stroke="#c5c5c7" stroke-width="1.400"/>
<!-- lock open big -->
<rect x="1617.300" y="326.200" width="23.500" height="18.400" rx="2.800" fill="#0b0b0b"/>
<path d="M1612.300,330.200 V322.200 a5.750,5.750 0 0 1 11.500,0 V327" stroke="#0b0b0b" stroke-width="3.300" stroke-linecap="round"/>
<!-- bolt -->
<path d="M1853.800,477.200 L1845,491.600 L1852.900,491.600 L1853.300,502.600 L1862,488.100 L1854,488.100 Z" fill="#0b0b0b"/>
</svg>
<div class="t" style="left:1265.25px;top:17.48px;font-size:21.7px;letter-spacing:0.000px;color:#3d3d3f;-webkit-text-stroke-width:0.5px;transform:scaleX(1.0528);">430 km</div>
<div class="t" style="left:1761.00px;top:289.02px;font-size:19px;letter-spacing:-0.000px;color:#8e8e90;-webkit-text-stroke-width:0.3px;transform:scaleX(1.0649);">Trunk</div>
<div class="t" style="left:1759.93px;top:319.74px;font-size:22.4px;letter-spacing:1.251px;color:#444446;-webkit-text-stroke-width:0.8px;transform:scaleX(1.0700);">Open</div>
<div class="t" style="left:1291.33px;top:429.42px;font-size:19px;letter-spacing:0.039px;color:#8e8e90;-webkit-text-stroke-width:0.3px;transform:scaleX(1.0700);">Frunk</div>
<div class="t" style="left:1282.93px;top:459.64px;font-size:22.4px;letter-spacing:1.251px;color:#444446;-webkit-text-stroke-width:0.8px;transform:scaleX(1.0700);">Open</div>
</div></div>
<div id="panel"><div class="g"><div class="abs" id="selbg"></div>
<div class="seg" style="left:440px;top:260px;width:284px;height:80px"></div>
<div class="segon" style="left:582px;top:262px;width:140px;height:76px"></div>
<div class="cb" style="top:247px"></div>
<div class="cb" style="top:313px"></div>
<div class="cb" style="top:379px"></div>
<div class="tog" style="top:477.5px"><i></i></div>
<div class="seg" style="left:440px;top:598px;width:510px;height:80px"></div>
<div class="segon" style="left:780px;top:600px;width:168px;height:76px"></div>
<div class="abs" style="left:961px;top:598px;width:140px;height:80px;border-radius:9px;background:#3f6bd6"></div>
<div class="btn" style="left:440px"></div>
<div class="btn" style="left:790px"></div>
<div class="abs" style="left:440px;top:875px;width:680px;height:1.5px;background:#dcdcde"></div>
<div class="tog on" style="top:917px"><i></i></div>
<div class="tog" style="top:997px"><i></i></div>
<div class="tog" style="top:1077px"><i></i></div>
<div class="t" style="left:109.85px;top:111.51px;font-size:24.5px;letter-spacing:0.000px;color:#8e8e90;-webkit-text-stroke-width:0.5px;transform:scaleX(1.0491);">Controls</div>
<div class="t" style="left:109.14px;top:185.51px;font-size:24.5px;letter-spacing:0.000px;color:#8e8e90;-webkit-text-stroke-width:0.5px;transform:scaleX(1.0295);">Pedals &amp; Steering</div>
<div class="t" style="left:109.85px;top:259.51px;font-size:24.5px;letter-spacing:0.000px;color:#8e8e90;-webkit-text-stroke-width:0.5px;transform:scaleX(1.0522);">Charging</div>
<div class="t" style="left:110.90px;top:333.51px;font-size:24.5px;letter-spacing:-0.000px;color:#8e8e90;-webkit-text-stroke-width:0.5px;transform:scaleX(1.0676);">Autopilot</div>
<div class="t" style="left:109.06px;top:407.51px;font-size:24.5px;letter-spacing:0.029px;color:#8e8e90;-webkit-text-stroke-width:0.5px;transform:scaleX(1.0700);">Locks</div>
<div class="t" style="left:109.06px;top:481.51px;font-size:24.5px;letter-spacing:0.216px;color:#8e8e90;-webkit-text-stroke-width:0.5px;transform:scaleX(1.0700);">Lights</div>
<div class="t" style="left:109.13px;top:555.51px;font-size:24.5px;letter-spacing:0.000px;color:#8e8e90;-webkit-text-stroke-width:0.5px;transform:scaleX(1.0369);">Display</div>
<div class="t" style="left:110.50px;top:629.51px;font-size:24.5px;letter-spacing:-0.000px;color:#8e8e90;-webkit-text-stroke-width:0.5px;transform:scaleX(1.0172);">Trips</div>
<div class="t" style="left:109.06px;top:703.51px;font-size:24.5px;letter-spacing:0.000px;color:#8e8e90;-webkit-text-stroke-width:0.5px;transform:scaleX(1.0695);">Navigation</div>
<div class="t" style="left:109.86px;top:777.51px;font-size:24.5px;letter-spacing:0.000px;color:#3d3d3f;-webkit-text-stroke-width:0.5px;transform:scaleX(1.0389);">Safety</div>
<div class="t" style="left:109.85px;top:851.51px;font-size:24.5px;letter-spacing:0.000px;color:#8e8e90;-webkit-text-stroke-width:0.5px;transform:scaleX(1.0478);">Service</div>
<div class="t" style="left:109.84px;top:925.51px;font-size:24.5px;letter-spacing:0.000px;color:#8e8e90;-webkit-text-stroke-width:0.5px;transform:scaleX(1.0562);">Software</div>
<div class="t" style="left:110.16px;top:999.51px;font-size:24.5px;letter-spacing:0.000px;color:#8e8e90;-webkit-text-stroke-width:0.5px;transform:scaleX(1.0373);">Upgrades</div>
<div class="t" style="left:490.36px;top:104.51px;font-size:24.5px;letter-spacing:0.047px;color:#3d3d3f;-webkit-text-stroke-width:0.5px;transform:scaleX(1.0700);">Profile</div>
<div class="t" style="left:439.44px;top:199.77px;font-size:22.3px;letter-spacing:0.000px;color:#3d3d3f;-webkit-text-stroke-width:0.5px;transform:scaleX(1.0619);">Sentry Mode</div>
<div class="t" style="left:495.18px;top:284.77px;font-size:22.3px;letter-spacing:0.269px;color:#8e8e90;-webkit-text-stroke-width:0.45px;transform:scaleX(1.0700);">Off</div>
<div class="t" style="left:636.45px;top:284.77px;font-size:22.3px;letter-spacing:0.000px;color:#3d3d3f;-webkit-text-stroke-width:0.45px;transform:scaleX(1.0514);">On</div>
<div class="t" style="left:440.50px;top:358.22px;font-size:21px;letter-spacing:0.375px;color:#8e8e90;-webkit-text-stroke-width:0.45px;transform:scaleX(1.0700);">Sentry Mode will be enabled</div>
<div class="t" style="left:441.57px;top:383.97px;font-size:21px;letter-spacing:0.160px;color:#8e8e90;-webkit-text-stroke-width:0.45px;transform:scaleX(1.0700);">when you leave the car</div>
<div class="t" style="left:847.24px;top:248.21px;font-size:19.6px;letter-spacing:0.000px;color:#555557;-webkit-text-stroke-width:0.45px;transform:scaleX(1.0623);">Exclude Home</div>
<div class="t" style="left:847.23px;top:314.21px;font-size:19.6px;letter-spacing:0.009px;color:#555557;-webkit-text-stroke-width:0.45px;transform:scaleX(1.0700);">Exclude Work</div>
<div class="t" style="left:847.23px;top:380.21px;font-size:19.6px;letter-spacing:0.000px;color:#555557;-webkit-text-stroke-width:0.45px;transform:scaleX(1.0695);">Exclude Favorites</div>
<div class="t" style="left:551.00px;top:481.27px;font-size:22.3px;letter-spacing:0.000px;color:#3d3d3f;-webkit-text-stroke-width:0.5px;transform:scaleX(1.0353);">View Live Camera via Mobile App</div>
<div class="t" style="left:440.40px;top:558.27px;font-size:22.3px;letter-spacing:0.000px;color:#3d3d3f;-webkit-text-stroke-width:0.5px;transform:scaleX(1.0032);">Dashcam</div>
<div class="t" style="left:509.93px;top:623.07px;font-size:22.3px;letter-spacing:0.059px;color:#8e8e90;-webkit-text-stroke-width:0.45px;transform:scaleX(1.0700);">Off</div>
<div class="t" style="left:657.97px;top:623.07px;font-size:22.3px;letter-spacing:0.000px;color:#8e8e90;-webkit-text-stroke-width:0.45px;transform:scaleX(1.0341);">Manual</div>
<div class="t" style="left:841.20px;top:623.07px;font-size:22.3px;letter-spacing:0.000px;color:#3d3d3f;-webkit-text-stroke-width:0.45px;transform:scaleX(1.0359);">Auto</div>
<div class="t" style="left:990.30px;top:623.57px;font-size:20px;letter-spacing:0.000px;color:#fff;-webkit-text-stroke-width:0.4px;transform:scaleX(1.0172);">On Honk</div>
<div class="t" style="left:492.08px;top:779.27px;font-size:22.3px;letter-spacing:0.000px;color:#3d3d3f;-webkit-text-stroke-width:0.5px;transform:scaleX(1.0231);">Delete Dashcam Clips</div>
<div class="t" style="left:862.78px;top:779.27px;font-size:22.3px;letter-spacing:0.000px;color:#3d3d3f;-webkit-text-stroke-width:0.5px;transform:scaleX(1.0196);">Format USB Drive</div>
<div class="t" style="left:551.40px;top:921.77px;font-size:22.3px;letter-spacing:0.000px;color:#3d3d3f;-webkit-text-stroke-width:0.5px;transform:scaleX(1.0450);">Allow Mobile Access</div>
<div class="t" style="left:550.36px;top:1001.77px;font-size:22.3px;letter-spacing:0.000px;color:#3d3d3f;-webkit-text-stroke-width:0.5px;transform:scaleX(1.0431);">PIN to Drive</div>
<div class="t" style="left:550.36px;top:1081.77px;font-size:22.3px;letter-spacing:0.000px;color:#3d3d3f;-webkit-text-stroke-width:0.5px;transform:scaleX(1.0409);">Glovebox PIN</div>
<svg width="1180" height="1100" viewBox="0 0 1180 1100" style="left:0;top:0" fill="#8a8a8c" stroke="none">
<!-- controls -->
<rect x="62.5" y="117.5" width="25" height="15" rx="7.5"/>
<circle cx="80.6" cy="125" r="5.2" fill="#ededef"/>
<!-- pedals car -->
<g transform="translate(62,190) scale(0.5626,0.528)">
<path id="carfront" fill-rule="evenodd" d="M10.4,0.9 C13,0.2 32.6,0.2 35.2,0.9 C38.3,1.8 39,5 40,9.2 L40.6,8.6 C41.2,8 45.6,8 45.6,9.8 C45.6,11.6 43,12 41.4,12.3 C44.6,14.8 45.4,17.5 45.4,21.5 L45.4,32 C45.4,33.6 44.8,34.1 43.6,34.1 L39.6,34.1 C38.4,34.1 37.9,33.4 37.9,32.2 L37.9,30.3 L7.7,30.3 L7.7,32.2 C7.7,33.4 7.2,34.1 6,34.1 L2,34.1 C0.8,34.1 0.2,33.6 0.2,32 L0.2,21.5 C0.2,17.5 1,14.8 4.2,12.3 C2.6,12 0,11.6 0,9.8 C0,8 4.4,8 5,8.6 L5.6,9.2 C6.6,5 7.3,1.8 10.4,0.9 Z M8,10.9 L37.6,10.9 C36.6,7 36.2,4.6 33.8,3.6 C31.6,2.9 14,2.9 11.8,3.6 C9.4,4.6 9,7 8,10.9 Z M3.2,15.3 C2.6,17 2.6,19.2 3.6,19.6 L10.8,19.6 C9,17.6 6,16 3.2,15.3 Z M42.4,15.3 C43,17 43,19.2 42,19.6 L34.8,19.6 C36.6,17.6 39.600,16 42.4,15.3 Z"/>
</g>
<!-- charging bolt -->
<path d="M75.2,260.2 L66.6,275.6 L73.6,275.6 L75,285.4 L83.5,270.2 L76.4,270.2 Z"/>
<!-- autopilot wheel -->
<circle cx="75" cy="347.2" r="11" fill="none" stroke="#8a8a8c" stroke-width="3"/>
<path d="M65.2,344.2 C69,342.6 81,342.6 84.8,344.2 L85,347.6 C81.5,348.2 78.4,350 77.6,353.5 L77.4,358 L72.6,358 L72.400,353.5 C71.6,350 68.5,348.2 65,347.6 Z"/>
<!-- locks -->
<rect x="66.200" y="419.200" width="18" height="12.2" rx="1.8"/>
<path d="M70.2,420 V415.300 a4.800,4.800 0 0 1 9.6,0 V420" fill="none" stroke="#8a8a8c" stroke-width="3"/>
<!-- lights -->
<circle cx="75" cy="495" r="5.200" fill="none" stroke="#8a8a8c" stroke-width="2"/>
<rect x="72.700" y="483.800" width="4.600" height="6.300" rx="0.700" fill="#8a8a8c"/>
<g stroke="#8a8a8c" stroke-width="1.900" stroke-linecap="round">
<path d="M63.400,495 H64.900 M85.100,495 H86.600 M75,505.100 V506.600 M66.900,486.700 L68.100,487.900 M83.100,486.700 L81.900,487.900 M66.900,503.300 L68.100,502.100 M83.100,503.300 L81.900,502.100"/>
</g>
<!-- display -->
<rect x="63.600" y="559.900" width="22.800" height="17.800" rx="3.400" fill="none" stroke="#8a8a8c" stroke-width="2.200"/>
<path d="M67.300,565.400 L69.400,563.600 M67.300,570.900 L74.600,563.600" stroke="#8a8a8c" stroke-width="1.500" stroke-linecap="round" fill="none"/>
<!-- trips -->
<path d="M66.200,647.900 V637.100 a4.400,4.400 0 0 1 8.800,0 V648.400 a4.500,4.500 0 0 0 9,0 V636" fill="none" stroke="#8a8a8c" stroke-width="2"/>
<circle cx="66.200" cy="650.500" r="2.600" fill="#ededef" stroke="#8a8a8c" stroke-width="1.800"/>
<circle cx="84" cy="634.800" r="3" fill="#8a8a8c"/>
<!-- navigation -->
<path d="M75,707.600 L83.600,725.400 L75,722.300 L66.400,725.400 Z" stroke="#8a8a8c" stroke-width="1.200" stroke-linejoin="round"/>
<!-- safety -->
<circle cx="75" cy="790.800" r="11.350" fill="none" stroke="#0c0c0c" stroke-width="2.300"/>
<path d="M75,785.400 V791.600" stroke="#0c0c0c" stroke-width="2.200" stroke-linecap="round" fill="none"/>
<circle cx="75" cy="796.600" r="1.350" fill="#0c0c0c"/>
<!-- service wrench -->
<path d="M66.200,873.800 L76.500,863.900" stroke="#8a8a8c" stroke-width="4.300" stroke-linecap="round" fill="none"/>
<circle cx="79.300" cy="860.700" r="6.600" fill="#8a8a8c"/>
<path d="M80.900,859.500 L90,850.400" stroke="#ededef" stroke-width="4.600" stroke-linecap="round" fill="none"/>
<!-- software -->
<path d="M75,929.300 V943.200 M68.300,937.200 L75,943.800 L81.700,937.200 M65.200,948.700 H85" fill="none" stroke="#8a8a8c" stroke-width="2"/>
<!-- upgrades -->
<path d="M69.300,1009 H80.700 Q82.500,1009 82.700,1010.800 L83.900,1020.800 Q84.100,1022.800 82.100,1022.800 H67.900 Q65.900,1022.800 66.100,1020.800 L67.300,1010.800 Q67.500,1009 69.300,1009 Z" fill="none" stroke="#8a8a8c" stroke-width="2" stroke-linejoin="round"/>
<path d="M71.200,1011.800 V1006.600 a3.800,3.800 0 0 1 7.600,0 V1011.800" fill="none" stroke="#8a8a8c" stroke-width="2" stroke-linecap="round"/>
</svg>

<svg width="1180" height="1100" viewBox="0 0 1180 1100" style="left:0;top:0" fill="none">
<!-- profile -->
<circle cx="460" cy="114.200" r="5.650" fill="#808082"/>
<path d="M450.300,129 C451,124.600 455,121.800 460,121.800 C465,121.800 469,124.600 469.700,129 C469.900,130.200 469.300,131 468.200,131 H451.800 C450.700,131 450.100,130.200 450.300,129 Z" fill="#808082"/>
<!-- bell -->
<path d="M946,110.800 C942.600,110.800 939.800,113.600 939.800,117 L939.800,121 C939.800,123.600 938.600,125.600 937,127.800 L955,127.800 C953.400,125.600 952.200,123.600 952.200,121 L952.200,117 C952.200,113.600 949.400,110.800 946,110.800 Z" fill="#bbbbbd"/>
<path d="M942.700,129.200 H949.500 C949,130.900 947.600,131.800 946.100,131.800 C944.600,131.800 943.200,130.900 942.700,129.200 Z" fill="#bbbbbd"/>
<!-- bluetooth -->
<path d="M1017.800,114.600 L1033.700,125.800 L1025.600,131.600 V108.100 L1033.700,114.100 L1017.800,125.500" stroke="#7b7b7d" stroke-width="2" stroke-linejoin="round" stroke-linecap="round"/>
<!-- wifi -->
<circle cx="1106" cy="127.5" r="1.800" fill="#7b7b7d"/>
<path d="M1102.32,123.69 A5.3,5.3 0 0 1 1109.68,123.69" stroke="#7b7b7d" stroke-width="2.300" stroke-linecap="round"/>
<path d="M1098.91,119.89 A10.4,10.4 0 0 1 1113.09,119.89" stroke="#7b7b7d" stroke-width="2.300" stroke-linecap="round"/>
<path d="M1095.30,116.42 A15.4,15.4 0 0 1 1116.70,116.42" stroke="#b4b4b6" stroke-width="2.300" stroke-linecap="round"/>
</svg>

<svg width="1180" height="1100" viewBox="0 0 1180 1100" style="left:0;top:0" fill="none" stroke="#7b7b7d" stroke-width="2">
<g id="info1"><circle cx="600" cy="215" r="11.500"/><path d="M600,213.400 V221.400" stroke-linecap="round" stroke-width="2.200"/><circle cx="600" cy="209.200" r="1.300" fill="#7b7b7d" stroke="none"/></g>
<g transform="translate(322.100,282.800)"><circle cx="600" cy="215" r="11.500"/><path d="M600,213.400 V221.400" stroke-linecap="round" stroke-width="2.200"/><circle cx="600" cy="209.200" r="1.300" fill="#7b7b7d" stroke="none"/></g>
<g transform="translate(-39.200,358.200)"><circle cx="600" cy="215" r="11.500"/><path d="M600,213.400 V221.400" stroke-linecap="round" stroke-width="2.200"/><circle cx="600" cy="209.200" r="1.300" fill="#7b7b7d" stroke="none"/></g>
</svg>

</div></div>
<div id="status"><svg width="1920" height="60" viewBox="0 0 1920 60" style="left:0;top:0" fill="none">
<!-- profile icon -->
<circle cx="695.600" cy="24.600" r="5.150" fill="#6b6b6d"/>
<path d="M686.700,39.800 C687.300,35.400 691,32.200 695.600,32.200 C700.200,32.200 703.900,35.400 704.500,39.800 C704.700,41 704.100,41.700 703.100,41.700 H688.100 C687.100,41.700 686.500,41 686.700,39.800 Z" fill="#6b6b6d"/>
<!-- record -->
<circle cx="864.900" cy="29.900" r="11.400" fill="#f4f4f5" stroke="#0c0c0c" stroke-width="2.200"/>
<circle cx="864.900" cy="29.900" r="8" fill="#e8383c"/>
<!-- lock open -->
<rect x="1136.200" y="27.500" width="17.800" height="13.400" rx="2.200" fill="#0b0b0b"/>
<path d="M1132.300,29.500 V24.400 a4.350,4.350 0 0 1 8.700,0 V28.500" stroke="#0b0b0b" stroke-width="2.500" stroke-linecap="round"/>
</svg>
<div class="t" style="left:725.83px;top:15.60px;font-size:22.8px;letter-spacing:0.663px;color:#3d3d3f;-webkit-text-stroke-width:0.5px;transform:scaleX(1.0700);">Profile</div>
<div class="t" style="left:910.73px;top:15.60px;font-size:22.8px;letter-spacing:0.954px;color:#3d3d3f;-webkit-text-stroke-width:0.5px;transform:scaleX(1.0700);">26°C</div>
<div class="t" style="left:1002.68px;top:15.60px;font-size:22.8px;letter-spacing:0.000px;color:#3d3d3f;-webkit-text-stroke-width:0.5px;transform:scaleX(1.0179);">11:49 am</div>
</div>
</div>
<div id="bar"><div class="g"><svg width="1920" height="100" viewBox="0 1100 1920 100" style="left:0;top:1100px" fill="none">
<!-- chevrons -->
<g stroke="#4d4d4d" stroke-width="1.900" stroke-linejoin="miter">
<path d="M48.600,1143.300 L41.200,1150 L48.600,1156.700"/>
<path d="M151.800,1143.300 L159.200,1150 L151.800,1156.700"/>
<path d="M293.200,1143.300 L285.800,1150 L293.200,1156.700"/>
<path d="M446.800,1143.300 L454.200,1150 L446.800,1156.700"/>
<path d="M1473.200,1143.300 L1465.800,1150 L1473.200,1156.700"/>
<path d="M1626.800,1143.300 L1634.200,1150 L1626.800,1156.700"/>
</g>
<!-- speaker -->
<path d="M75.600,1144.400 H83.600 L92.200,1137 C92.600,1136.700 93.100,1136.900 93.100,1137.400 V1162.600 C93.100,1163.100 92.600,1163.300 92.200,1163 L83.600,1156 H75.600 C75.200,1156 75,1155.800 75,1155.400 V1145 C75,1144.600 75.200,1144.400 75.600,1144.400 Z" fill="#c6c6c6"/>
<path d="M98.200,1143.600 C103,1146.400 103,1153.600 98.200,1156.600 C100,1153 100,1147 98.200,1143.600 Z" fill="#c6c6c6" stroke="#c6c6c6" stroke-width="1.100" stroke-linejoin="round"/>
<path d="M105.300,1137.200 C114,1143.400 114,1156.600 105.300,1163 C110.200,1156 110.200,1144 105.300,1137.200 Z" fill="#c6c6c6" stroke="#c6c6c6" stroke-width="1.200" stroke-linejoin="round"/>
<path d="M112,1131 C124,1140 124,1160 112,1169" stroke="#4d4d4d" stroke-width="2.600" stroke-linecap="round"/>
<!-- more box -->
<rect x="841.700" y="1131.700" width="36.800" height="36.800" rx="5.500" stroke="#454545" stroke-width="1.400"/>
<circle cx="849.900" cy="1150.100" r="2.900" fill="#9c9c9c"/><circle cx="860" cy="1150.100" r="2.900" fill="#9c9c9c"/><circle cx="870.100" cy="1150.100" r="2.900" fill="#9c9c9c"/>
<!-- camera -->
<defs><radialGradient id="lens" cx="0.45" cy="0.4" r="0.6"><stop offset="0" stop-color="#5a5a5a"/><stop offset="1" stop-color="#202020"/></radialGradient></defs>
<circle cx="960" cy="1149.800" r="19.400" stroke="#4a4a4a" stroke-width="3.400" fill="#0a0a0a"/>
<circle cx="960" cy="1149.800" r="15.200" stroke="#8a2fc4" stroke-width="1" fill="#161616"/>
<circle cx="960" cy="1150.500" r="8.600" fill="url(#lens)"/>
<circle cx="964.100" cy="1145" r="3" fill="#fff"/>
<!-- phone -->
<path d="M1046.600,1131.400 C1047.600,1130.700 1050.200,1129.400 1051.600,1130.200 C1052.800,1130.900 1055.800,1136.400 1056.200,1137.600 C1056.600,1138.800 1055.800,1139.600 1055,1140.200 C1053.600,1141.200 1052.800,1141.800 1053,1143 C1053.600,1146.600 1059,1154 1062.600,1156 C1063.800,1156.600 1064.800,1156 1066,1154.800 C1067,1153.800 1068,1152.800 1069.400,1153.400 C1071,1154.100 1076.400,1157.600 1077.800,1159 C1079.200,1160.400 1077.600,1162.800 1076.600,1164 C1074.600,1166.400 1072,1168.600 1068.600,1168.200 C1055.600,1166.600 1042,1148 1041.200,1139.400 C1040.900,1136 1043.600,1133.400 1046.600,1131.400 Z" fill="#33d25f"/>
<!-- defrost icons -->
<g stroke="#ababab" stroke-width="1.100" stroke-linecap="round">
<path d="M1536.400,1187.300 C1534.600,1186.600 1533.800,1184.400 1534.600,1182.200 C1538,1178.200 1546.200,1178.200 1549.600,1182.200 C1550.400,1184.400 1549.600,1186.600 1547.800,1187.300"/>
<path id="w1" d="M1539,1184.600 c-1.200,1.400 1,2.400 0,3.800 c-1,1.400 1,2.400 0.300,3.800"/>
<path d="M1542.400,1184.600 c-1.200,1.400 1,2.400 0,3.800 c-1,1.400 1,2.400 0.300,3.800"/>
<path d="M1545.800,1184.600 c-1.200,1.400 1,2.400 0,3.800 c-1,1.400 1,2.400 0.300,3.800"/>
<path d="M1561.400,1187.600 H1560.400 C1559.400,1187.600 1558.900,1187 1558.900,1186 V1181 C1558.900,1180 1559.400,1179.400 1560.400,1179.400 H1573.600 C1574.600,1179.400 1575.100,1180 1575.100,1181 V1186 C1575.100,1187 1574.600,1187.600 1573.600,1187.600 H1572.600"/>
<path d="M1563.600,1184.600 c-1.200,1.400 1,2.400 0,3.800 c-1,1.400 1,2.400 0.300,3.800"/>
<path d="M1567,1184.600 c-1.200,1.400 1,2.400 0,3.800 c-1,1.400 1,2.400 0.300,3.800"/>
<path d="M1570.400,1184.600 c-1.200,1.400 1,2.400 0,3.800 c-1,1.400 1,2.400 0.300,3.800"/>
</g>
<!-- car icon -->
<g transform="translate(1817.100,1133)" fill="#9c9c9c">
<path fill-rule="evenodd" d="M10.400,0.900 C13,0.200 32.600,0.200 35.200,0.900 C38.300,1.800 39,5 40,9.200 L40.600,8.600 C41.200,8 45.600,8 45.600,9.800 C45.600,11.600 43,12 41.400,12.300 C44.600,14.800 45.400,17.500 45.400,21.500 L45.400,32 C45.400,33.600 44.800,34.100 43.600,34.100 L39.600,34.100 C38.400,34.100 37.900,33.400 37.900,32.200 L37.900,30.300 L7.700,30.300 L7.700,32.200 C7.700,33.400 7.200,34.100 6,34.100 L2,34.100 C0.800,34.100 0.200,33.600 0.200,32 L0.200,21.500 C0.200,17.500 1,14.800 4.200,12.300 C2.600,12 0,11.600 0,9.800 C0,8 4.400,8 5,8.600 L5.600,9.200 C6.600,5 7.300,1.800 10.400,0.900 Z M8,10.900 L37.600,10.900 C36.600,7 36.200,4.600 33.800,3.600 C31.600,2.900 14,2.900 11.800,3.600 C9.400,4.600 9,7 8,10.900 Z M3.200,15.300 C2.600,17 2.600,19.200 3.600,19.600 L10.800,19.600 C9,17.600 6,16 3.200,15.300 Z M42.400,15.300 C43,17 43,19.200 42,19.600 L34.800,19.600 C36.600,17.600 39.600,16 42.400,15.300 Z"/>
</g>
<!-- temperature digits -->
<g fill="#c9c9c9" stroke="#000" font-family="Liberation Sans, sans-serif" text-rendering="geometricPrecision">
<g id="tempL">
<text transform="translate(324.400,1168.200) scale(1.07,1)" font-size="51" stroke-width="2.100" letter-spacing="0.600">22</text>
<rect x="386" y="1162.900" width="4.400" height="4.400" stroke="none"/>
<text transform="translate(391.900,1168) scale(1.09,1)" font-size="39" stroke-width="1.700">0</text>
</g>
<g transform="translate(1180,0)">
<text transform="translate(324.400,1168.200) scale(1.07,1)" font-size="51" stroke-width="2.100" letter-spacing="0.600">22</text>
<rect x="386" y="1162.900" width="4.400" height="4.400" stroke="none"/>
<text transform="translate(391.900,1168) scale(1.09,1)" font-size="39" stroke-width="1.700">0</text>
</g>
</g>
</svg>
</div></div>
</body>
</html>
